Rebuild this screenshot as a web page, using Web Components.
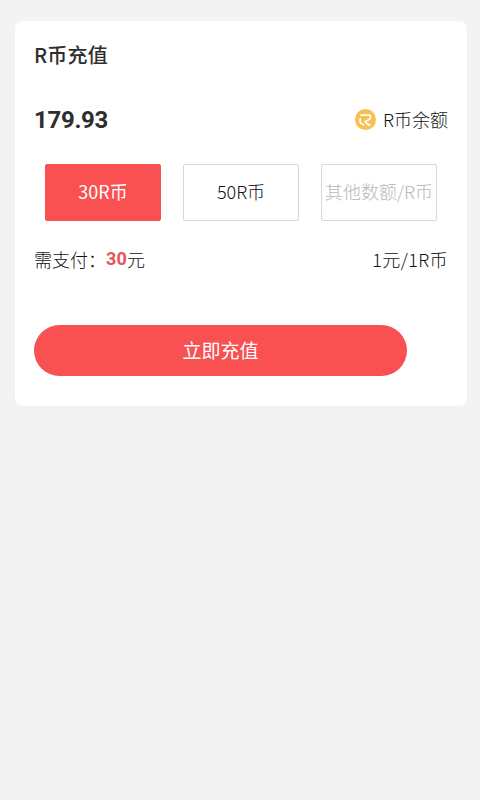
<!DOCTYPE html>
<html lang="zh-CN"><head><meta charset="utf-8"><style>
html,body{margin:0;height:800px;overflow:hidden;background:#f3f3f3}
body{font-family:"Noto Sans CJK SC","Noto Sans",sans-serif;color:#2b2b2b}
</style></head><body>
<recharge-page>
  <recharge-card>
    <span slot="title">R币充值</span>
    <span slot="amount">179.93</span>
    <balance-label slot="balance">R币余额</balance-label>
    <option-box slot="options" selected>30R币</option-box>
    <option-box slot="options">50R币</option-box>
    <option-box slot="options" placeholder>其他数额/R币</option-box>
    <pay-row slot="pay"></pay-row>
    <pill-button slot="action">立即充值</pill-button>
  </recharge-card>
</recharge-page>
<script>
function def(name,html){customElements.define(name,class extends HTMLElement{constructor(){super();this.attachShadow({mode:'open'}).innerHTML=html}})}
def('recharge-page',`<style>:host{display:block;padding:21px 13px 0 15px}</style><slot></slot>`);
def('recharge-card',`<style>
:host{display:block;box-sizing:border-box;height:385px;background:#fff;border-radius:8px;padding:0 19px}
.title{font-size:20px;font-weight:500;line-height:28px;padding-top:20px;height:28px;letter-spacing:.2px;color:#2e2e2e}
.top{display:flex;justify-content:space-between;align-items:center;height:36px;margin-top:32px}
.amount{font-family:Roboto,"Noto Sans",sans-serif;font-size:24px;font-weight:700;line-height:38px;padding-top:1px;letter-spacing:-.3px;color:#2e2e2e}
.opts{display:flex;gap:22px;padding:0 0 0 11px;margin-top:27px}
.pay{margin-top:24px}.act{margin-top:52px}
</style>
<div class="title"><slot name="title"></slot></div>
<div class="top"><span class="amount"><slot name="amount"></slot></span><slot name="balance"></slot></div>
<div class="opts"><slot name="options"></slot></div>
<div class="pay"><slot name="pay"></slot></div>
<div class="act"><slot name="action"></slot></div>`);
def('balance-label',`<style>:host{display:flex;align-items:center;gap:7px;font-size:18px;font-weight:300;line-height:24px;color:#111}
svg{display:block}</style>
<svg width="21" height="21" viewBox="0 0 21 21"><circle cx="10.5" cy="10.5" r="10.5" fill="#f8c050"/>
<path d="M6 6.2h8.4c1.7 0 1.7 3.4-.6 4.5l-3.6 1.7M15 16c-1.9 0-3.4-1.6-4.8-3.6M5.3 9.6c-.9 2.7.2 5.6 3.2 6.2" fill="none" stroke="#fff" stroke-width="1.7" stroke-linecap="round" stroke-linejoin="round"/></svg><slot></slot>`);
def('option-box',`<style>:host{display:flex;align-items:center;justify-content:center;box-sizing:border-box;width:116px;height:57px;padding-bottom:3px;border:1px solid #d3d9df;border-radius:2px;font-size:18px;font-weight:300;color:#111;white-space:nowrap;background:#fff}
:host([selected]){background:#f95051;border-color:#f95051;color:#fff;font-weight:400}
:host([placeholder]){color:#b4b8bf}</style><slot></slot>`);
def('pay-row',`<style>:host{display:flex;justify-content:space-between;align-items:center;font-size:18px;font-weight:300;line-height:28px;color:#111}
b{color:#e85555;font-family:Roboto,"Noto Sans",sans-serif;font-size:18px;font-weight:700;letter-spacing:.2px}.l{display:flex;align-items:center}.r{letter-spacing:.4px}</style>
<span class="l">需支付：<b>30</b>元</span><span class="r">1元/1R币</span>`);
def('pill-button',`<style>:host{display:flex;align-items:center;justify-content:center;box-sizing:border-box;width:373px;height:51px;padding-bottom:3px;border-radius:26px;background:#f95051;color:#fff;font-size:19px;font-weight:400}</style><slot></slot>`);
</script></body></html>
